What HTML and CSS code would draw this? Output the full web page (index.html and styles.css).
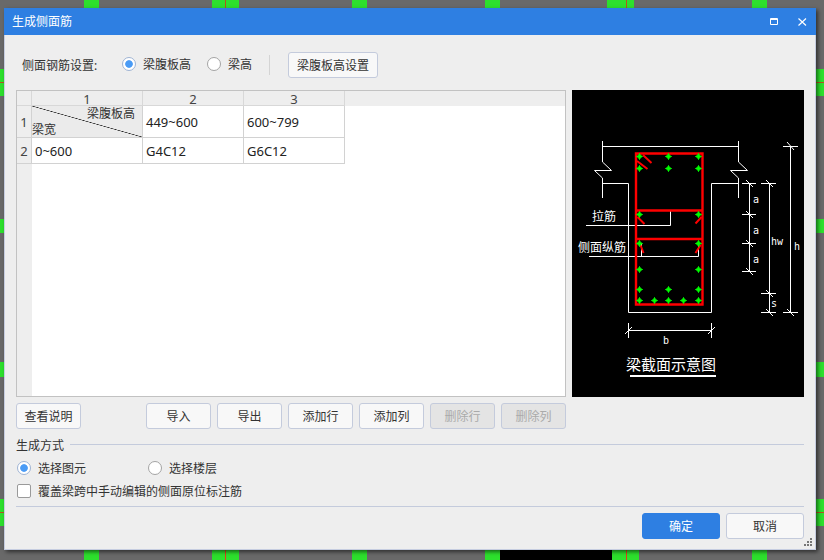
FILE: index.html
```html
<!DOCTYPE html>
<html lang="zh-CN">
<head>
<meta charset="utf-8">
<title>生成侧面筋</title>
<link rel="stylesheet" href="styles.css">
</head>
<body>
<div class="dialog">
  <header class="titlebar">
    <span class="title">生成侧面筋</span>
    <div class="win-icons">
      <svg class="win-icon" width="9" height="8" viewBox="0 0 9 8"><path d="M.5 .5h7v6h-7z M.5 1.5h7" fill="none" stroke="#fff"/></svg>
      <svg class="win-icon" width="9" height="8" viewBox="0 0 9 8"><path d="M.5 .5l7.5 7M8 .5l-7.5 7" fill="none" stroke="#fff" stroke-width="1.2"/></svg>
    </div>
  </header>
  <main class="content">
    <div class="settings">
      <span class="settings-label">侧面钢筋设置:</span>
      <label class="option option-a"><span class="radio radio-on"></span>梁腹板高</label>
      <label class="option option-b"><span class="radio"></span>梁高</label>
      <span class="divider"></span>
      <button class="btn btn-setting">梁腹板高设置</button>
    </div>
    <div class="work">
      <div class="sheet">
        <div class="grid">
          <div class="cell head"></div>
          <div class="cell head">1</div>
          <div class="cell head">2</div>
          <div class="cell head">3</div>
          <div class="cell rowhead">1</div>
          <div class="cell corner"><span class="corner-top">梁腹板高</span><span class="corner-bottom">梁宽</span></div>
          <div class="cell data">449~600</div>
          <div class="cell data">600~799</div>
          <div class="cell rowhead">2</div>
          <div class="cell data">0~600</div>
          <div class="cell data">G4C12</div>
          <div class="cell data">G6C12</div>
        </div>
      </div>
      <svg class="figure" width="232" height="307" viewBox="0 0 232 307">
        <defs>
          <polygon id="dot" points="0,-3 1,-1 3,0 1,1 0,3 -1,1 -3,0 -1,-1" fill="#0f0" stroke="#0f0" stroke-width="1"/>
        </defs>
        <g class="w">
          <path d="M30.5 51V72L39.5 80.5H22.5L30.5 88V108M30.5 56.5H166.5M166.5 51V72L175.5 80.5H158.5L166.5 88V108"/>
          <path d="M30.5 93.5H56.5V222.5H139.5V93.5H166.5"/>
          <path d="M14 135.5H98.5V121M17 166.5H126.5V153M69.5 153V166"/>
          <path d="M177.5 93V181M170 93.5H184M170 124.5H184M170 153.5H184M170 181.5H184"/>
          <path d="M197.5 93V222M189 93.5H204M189 203.5H204M189 222.5H204"/>
          <path d="M218.5 56V222M211 56.5H226M211 222.5H226"/>
          <path d="M56.5 240.5H139.5M56.5 233V248M139.5 233V248"/>
          <path d="M174 90L181 97M174 121L181 128M174 150L181 157M174 178L181 185M194 90L201 97M194 200L201 207M194 219L201 226M215 52L222 60M215 219L222 226M53 244L60 237M136 244L143 237"/>
        </g>
        <g class="r">
          <path class="r2" d="M64 63.5H130.5V214.5H64ZM64 120.5H130.5M64 149H130.5"/>
          <path d="M65 71L75.5 79M71 65L79.5 73M65.5 127L72.5 134M129.5 127L123.5 133.5M68.5 155L71.5 163M128.5 155L123.5 163"/>
        </g>
        <use href="#dot" x="67.5" y="66.5"/><use href="#dot" x="96.5" y="66.5"/><use href="#dot" x="126.5" y="66.5"/>
        <use href="#dot" x="67.5" y="78.5"/><use href="#dot" x="96.5" y="78.5"/><use href="#dot" x="126.5" y="78.5"/>
        <use href="#dot" x="67.5" y="124.5"/><use href="#dot" x="126.5" y="124.5"/>
        <use href="#dot" x="67.5" y="153.5"/><use href="#dot" x="126.5" y="153.5"/>
        <use href="#dot" x="67.5" y="179.5"/><use href="#dot" x="126.5" y="179.5"/>
        <use href="#dot" x="67.5" y="199.5"/><use href="#dot" x="96.5" y="199.5"/><use href="#dot" x="126.5" y="199.5"/>
        <use href="#dot" x="67.5" y="210.5"/><use href="#dot" x="82.5" y="210.5"/><use href="#dot" x="96.5" y="210.5"/><use href="#dot" x="111.5" y="210.5"/><use href="#dot" x="126.5" y="210.5"/>
        <text class="t-cn" x="20" y="131">拉筋</text>
        <text class="t-cn" x="6" y="162">侧面纵筋</text>
        <text class="t-s" x="181" y="113">a</text>
        <text class="t-s" x="181" y="144">a</text>
        <text class="t-s" x="181" y="173">a</text>
        <text class="t-s" x="199" y="155">hw</text>
        <text class="t-s" x="222" y="160">h</text>
        <text class="t-s" x="199" y="217">s</text>
        <text class="t-s" x="91" y="254">b</text>
        <text class="t-title" x="54" y="280">梁截面示意图</text>
        <path class="u" d="M58 286H144"/>
      </svg>
    </div>
    <div class="toolbar">
      <button class="btn">查看说明</button>
      <div class="toolbar-right">
        <button class="btn">导入</button>
        <button class="btn">导出</button>
        <button class="btn">添加行</button>
        <button class="btn">添加列</button>
        <button class="btn" disabled>删除行</button>
        <button class="btn" disabled>删除列</button>
      </div>
    </div>
    <div class="group-title"><span class="group-name">生成方式</span><span class="rule"></span></div>
    <div class="mode">
      <label class="option mode-a"><span class="radio radio-on"></span><span class="opt-text">选择图元</span></label>
      <label class="option"><span class="radio"></span><span class="opt-text">选择楼层</span></label>
    </div>
    <label class="option overwrite"><span class="check"></span><span class="opt-text">覆盖梁跨中手动编辑的侧面原位标注筋</span></label>
    <div class="footer">
      <button class="btn btn-main btn-primary">确定</button>
      <button class="btn btn-main">取消</button>
    </div>
  </main>
  <svg class="grip" width="8" height="8" viewBox="0 0 8 8"><path d="M6 0h2v2H6zM3 3h2v2H3zM6 3h2v2H6zM0 6h2v2H0zM3 6h2v2H3zM6 6h2v2H6z" fill="#777"/></svg>
</div>
</body>
</html>
```

FILE: styles.css
```css
* { box-sizing: border-box; }
html, body { margin: 0; height: 560px; overflow: hidden; }
body {
  width: 824px;
  padding: 8px 8px 0 4px;
  font: 12px/16px "Noto Sans", "Noto Sans CJK SC", sans-serif;
  color: #333;
  background-color: #696969;
  background-repeat: no-repeat;
  background-image:
    linear-gradient(#000, #000),
    linear-gradient(#b5561a, #b5561a), linear-gradient(#b5561a, #b5561a),
    linear-gradient(#b5561a, #b5561a), linear-gradient(#b5561a, #b5561a),
    linear-gradient(#e0401a, #e0401a), linear-gradient(#e0401a, #e0401a),
    linear-gradient(#2de02d, #2de02d), linear-gradient(#2de02d, #2de02d),
    linear-gradient(#2de02d, #2de02d), linear-gradient(#2de02d, #2de02d),
    linear-gradient(#2de02d, #2de02d), linear-gradient(#2de02d, #2de02d),
    linear-gradient(#2de02d, #2de02d), linear-gradient(#2de02d, #2de02d),
    linear-gradient(#2de02d, #2de02d), linear-gradient(#2de02d, #2de02d),
    linear-gradient(#2de02d, #2de02d), linear-gradient(#2de02d, #2de02d),
    linear-gradient(#2de02d, #2de02d), linear-gradient(#2de02d, #2de02d),
    linear-gradient(#2de02d, #2de02d), linear-gradient(#2de02d, #2de02d);
  background-position:
    500px 550px,
    225px 0, 626px 0, 0 82px, 0 512px,
    225px 550px, 626px 550px,
    84px 0, 212px 0, 352px 0, 485px 0, 607px 0, 752px 0,
    84px 550px, 212px 550px, 352px 550px, 485px 550px, 612px 550px, 752px 550px,
    0 69px, 0 219px, 0 362px, 0 499px;
  background-size:
    112px 10px,
    1px 8px, 1px 8px, 824px 1px, 824px 1px,
    1px 10px, 1px 10px,
    15px 8px, 27px 8px, 15px 8px, 15px 8px, 27px 8px, 15px 8px,
    15px 10px, 27px 10px, 15px 10px, 15px 10px, 27px 10px, 15px 10px,
    824px 27px, 824px 14px, 824px 15px, 824px 27px;
}
.dialog {
  position: relative;
  display: flex;
  flex-direction: column;
  width: 812px;
  height: 542px;
  background: #eee;
  border: 1px solid #c6cde0;
  border-top: 0;
  box-shadow: 2px 2px 4px rgba(0, 0, 0, .55);
}
.titlebar {
  display: flex;
  align-items: center;
  justify-content: space-between;
  height: 27px;
  margin: 0 -1px;
  padding: 0 9px 0 8px;
  background: #2e7fe2;
  color: #fff;
}
.win-icons { display: flex; gap: 19px; align-items: center; }
.win-icon { display: block; }
.content { display: flex; flex-direction: column; padding: 0 11px; }
.settings { display: flex; align-items: center; height: 26px; margin-top: 17px; }
.settings-label { margin-left: 6px; width: 100px; padding-top: 1px; }
.option { display: flex; align-items: center; gap: 7px; }
.option-a { width: 85px; }
.option-b { width: 62px; }
.option-a .radio, .option-b .radio { margin-bottom: 2px; }
.opt-text { padding-top: 2px; }
.radio {
  width: 14px;
  height: 14px;
  border: 1px solid #a4a4a4;
  border-radius: 50%;
  background: #fff;
  flex: none;
}
.radio-on { background: radial-gradient(circle, #4a9bf5 3.4px, #fff 4.2px); border-color: #9fb4d4; }
.check { width: 14px; height: 14px; flex: none; border: 1px solid #9a9a9a; border-radius: 2px; background: #fff; }
.divider { width: 1px; height: 20px; background: #d4d4d4; margin-right: 18px; }
.btn {
  width: 65px;
  height: 26px;
  padding: 1px 0 0;
  border: 1px solid #c4cbdc;
  border-radius: 3px;
  background: #f8f8f8;
  color: #333;
  font: inherit;
}
.btn:disabled { background: #e4e4e4; color: #aaa; }
.btn-setting { width: 90px; }
.work { display: flex; gap: 6px; margin-top: 12px; height: 307px; }
.sheet {
  width: 550px;
  border: 1px solid #c2c2c2;
  background:
    linear-gradient(#eee, #eee) 0 0 / 100% 15px no-repeat,
    linear-gradient(#eee, #eee) 0 0 / 15px 100% no-repeat,
    #fff;
}
.grid {
  display: grid;
  grid-template-columns: 15px 111px 101px 101px;
  grid-template-rows: 15px 32px 26px;
  width: 328px;
}
.cell { border-right: 1px solid #d2d2d2; border-bottom: 1px solid #d2d2d2; }
.head, .rowhead { display: flex; align-items: center; justify-content: center; background: #eee; font-size: 13px; color: #444; }
.head { border-color: #d8d8d8; padding-top: 1px; }
.corner {
  position: relative;
  background: linear-gradient(to top right, transparent calc(50% - .6px), #222 50%, transparent calc(50% + .6px)) , #ebebeb;
}
.corner-top { position: absolute; top: 0; right: 7px; }
.corner-bottom { position: absolute; left: 0; bottom: -1px; }
.data { display: flex; align-items: center; padding-left: 3px; background: #fff; font-size: 13px; color: #222; }
.figure { display: block; background: #000; flex: none; }
.w path { fill: none; stroke: #fff; stroke-width: 1; }
.r path { fill: none; stroke: #f00; stroke-width: 2; }
.r .r2 { stroke-width: 2.4; }
.u { fill: none; stroke: #fff; stroke-width: 2; shape-rendering: crispEdges; }
.t-cn { fill: #fff; font: 12px "Noto Sans CJK SC", sans-serif; }
.t-s { fill: #fff; font: 10px "DejaVu Sans Mono", monospace; }
.t-title { fill: #fff; font: 15px "Noto Sans CJK SC", sans-serif; }
.toolbar { display: flex; justify-content: space-between; width: 550px; margin-top: 6px; }
.toolbar-right { display: flex; gap: 6px; }
.group-title { display: flex; align-items: center; gap: 6px; margin-top: 7px; height: 18px; }
.group-name { padding-top: 2px; }
.rule { flex: 1; height: 1px; background: #c4cbdc; margin-bottom: 1px; }
.mode { display: flex; margin-top: 5px; padding-left: 1px; }
.mode-a { width: 131px; }
.overwrite { margin-top: 5px; padding-left: 1px; }
.footer {
  display: flex;
  justify-content: flex-end;
  gap: 6px;
  margin-top: 6px;
  padding-top: 6px;
  border-top: 1px solid #c4cbdc;
}
.btn-main { width: 78px; }
.btn-primary { background: #2e7fe2; border-color: #2e7fe2; color: #fff; }
.grip { position: absolute; right: 3px; bottom: 3px; }
```
